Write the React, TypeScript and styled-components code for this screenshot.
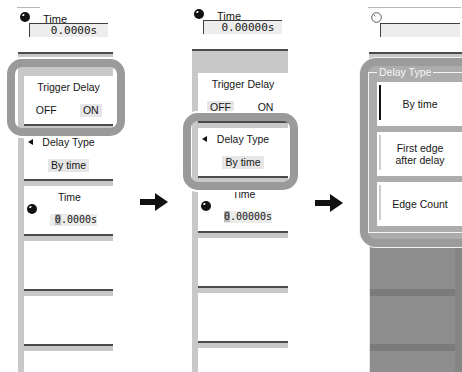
import React from "react";
import styled, { createGlobalStyle } from "styled-components";

const GlobalStyle = createGlobalStyle`
  html, body { margin: 0; padding: 0; background: #fff; }
  body {
    width: 462px; height: 372px; overflow: hidden;
    font-family: "Liberation Sans", Arial, sans-serif;
    color: #161616;
  }
`;

const Stage = styled.div`
  position: relative;
  width: 462px;
  height: 372px;
  overflow: hidden;
  box-sizing: border-box;
  padding-left: 18px;
  display: flex;
  align-items: flex-start;
  background: #fff;
`;

const Panel = styled.div<{ $w: number; $shift?: number; $gap?: number }>`
  flex: none;
  width: ${(p) => p.$w}px;
  margin-top: ${(p) => p.$shift ?? 0}px;
  margin-left: ${(p) => p.$gap ?? 0}px;
  display: flex;
  flex-direction: column;
  height: 420px;
`;

const Header = styled.div`
  height: 52px;
  box-sizing: border-box;
  padding-top: 7px;
  background: #fff;
  display: flex;
  flex-direction: column;
`;

const TopRule = styled.div<{ $w: string }>`
  height: 1px;
  width: ${(p) => p.$w};
  margin-left: -1px;
  background: ${(p) => (p.$w === "0" ? "transparent" : "#b9b9b9")};
`;

const HeaderRow = styled.div`
  display: flex;
  align-items: flex-start;
  height: 12px;
  margin-top: 4px;
  padding-left: 2px;
`;

const HeaderLabel = styled.span`
  margin-left: 13px;
  margin-top: 1px;
  font-size: 11px;
  line-height: 12px;
  text-decoration: underline;
  text-underline-offset: 1px;
`;

const HeaderField = styled.div<{ $w: number }>`
  margin-left: 11px;
  margin-top: -1px;
  width: ${(p) => p.$w}px;
  height: 14px;
  box-sizing: border-box;
  border-top: 1px solid #3e3e3e;
  border-left: 1px solid #3e3e3e;
  background: #ededed;
  padding-left: 10px;
  text-align: center;
  font-family: "DejaVu Sans Mono", "Liberation Mono", monospace;
  font-size: 11px;
  line-height: 13px;
  white-space: nowrap;
`;

const HeaderDivider = styled.div`
  height: 5px;
  border-top: 2px solid #4b4b4b;
  background: #c8c8c8;
`;

const Body = styled.div`
  flex: 1;
  background: #c8c8c8;
  padding-left: 6px;
  padding-top: 17px;
  display: flex;
  flex-direction: column;
`;

const Key = styled.div<{ $time?: boolean }>`
  flex: none;
  height: 48px;
  background: #fff;
  border-bottom: 2px solid #4b4b4b;
  margin-bottom: 5px;
  display: grid;
  grid-template-rows: 22px 24px;
  grid-template-columns: ${(p) => (p.$time ? "16px 1fr 14px" : "1fr")};
  font-size: 10.5px;
`;

const Title = styled.div<{ $col?: number }>`
  grid-row: 1;
  grid-column: ${(p) => p.$col ?? 1};
  display: flex;
  align-items: center;
  justify-content: center;
  line-height: 12px;
  white-space: nowrap;
`;

const MarkedTitle = styled.div`
  grid-row: 1;
  display: grid;
  grid-template-columns: 1fr auto 1fr;
  align-items: center;
  line-height: 12px;
  white-space: nowrap;
`;

const Pointer = styled.span`
  justify-self: start;
  margin-left: 4px;
  width: 0;
  height: 0;
  border-top: 3.5px solid transparent;
  border-bottom: 3.5px solid transparent;
  border-right: 5px solid #111;
`;

const OptionRow = styled.div`
  grid-row: 2;
  display: grid;
  grid-template-columns: 1fr 1fr;
  align-items: center;
  justify-items: center;
`;

const SingleRow = styled.div<{ $col?: number }>`
  grid-row: 2;
  grid-column: ${(p) => p.$col ?? 1};
  display: flex;
  align-items: center;
  justify-content: center;
`;

const Chip = styled.span<{ $on?: boolean }>`
  padding: 1px 3px;
  line-height: 11px;
  background: ${(p) => (p.$on ? "#e6e6e6" : "transparent")};
  white-space: nowrap;
`;

const KnobCell = styled.div`
  grid-column: 1;
  grid-row: 1 / span 2;
  align-self: center;
  justify-self: center;
  display: flex;
`;

const ValueChip = styled.span`
  margin-left: 8px;
  min-width: 47px;
  text-align: right;
  background: #ebebeb;
  font-family: "DejaVu Sans Mono", "Liberation Mono", monospace;
  font-size: 10px;
  line-height: 12px;
  white-space: nowrap;
`;

const Cursor = styled.span`
  background: #bcbcbc;
`;

const DimBody = styled.div`
  flex: 1;
  background: #8e8e8e;
  border-left: 1px solid #e4e4e4;
  border-right: 7px solid #858585;
  padding-top: 17px;
  display: flex;
  flex-direction: column;
`;

const DimKey = styled.div`
  flex: none;
  height: 48px;
  border-bottom: 7px solid #7b7b7b;
`;

const Arrow = styled.svg<{ $gap: number; $top: number }>`
  flex: none;
  display: block;
  margin-left: ${(p) => p.$gap}px;
  margin-top: ${(p) => p.$top}px;
`;

const Highlight = styled.div<{ $x: number; $y: number; $w: number; $h: number }>`
  position: absolute;
  left: ${(p) => p.$x}px;
  top: ${(p) => p.$y}px;
  width: ${(p) => p.$w}px;
  height: ${(p) => p.$h}px;
  box-sizing: border-box;
  border: 8px solid #9a9a9a;
  border-radius: 15px;
  box-shadow: 0 0 0 2px #fff;
  pointer-events: none;
`;

const Popup = styled.div`
  position: absolute;
  left: 360px;
  top: 58px;
  width: 118px;
  box-sizing: border-box;
  border: 8px solid #9b9b9b;
  border-radius: 16px;
  box-shadow: 0 0 0 1px #f2f2f2;
  background: #acacac;
  padding: 0 0 6px 0;
`;

const Group = styled.fieldset`
  margin: 0;
  border: 1px solid #f4f4f4;
  padding: 4px 6px 6px 8px;
  display: flex;
  flex-direction: column;
  gap: 6px;
  min-width: 0;
`;

const GroupLegend = styled.legend`
  padding: 0 2px;
  margin-left: 0;
  font-size: 10.5px;
  line-height: 12px;
  color: #f6f6f6;
`;

const Choice = styled.div<{ $on?: boolean }>`
  position: relative;
  height: 44px;
  width: 86px;
  background: #fff;
  display: flex;
  align-items: center;
  justify-content: center;
  text-align: center;
  font-size: 10.5px;
  line-height: 12px;
  &::before {
    content: "";
    position: absolute;
    left: 2px;
    top: 3px;
    bottom: 6px;
    width: 2px;
    background: ${(p) => (p.$on ? "#111" : "#cdcdcd")};
  }
`;

const Knob = ({ lit = true }: { lit?: boolean }) =>
  lit ? (
    <svg width="10" height="10" viewBox="0 0 10 10">
      <circle cx="5" cy="5" r="5" fill="#111" />
      <ellipse cx="3.4" cy="3" rx="1.3" ry="0.9" fill="#fff" transform="rotate(-35 3.4 3)" />
    </svg>
  ) : (
    <svg width="11" height="11" viewBox="0 0 11 11">
      <circle cx="5.5" cy="5.5" r="4.8" fill="#fff" stroke="#4a4a4a" strokeWidth="0.9" />
      <line x1="2.8" y1="2.8" x2="4.4" y2="4.4" stroke="#4a4a4a" strokeWidth="0.9" />
    </svg>
  );

const BigArrow = ({ gap, top }: { gap: number; top: number }) => (
  <Arrow $gap={gap} $top={top} width="28" height="18" viewBox="0 0 28 18">
    <rect x="0" y="6" width="16" height="6" fill="#111" />
    <polygon points="15,0 28,9 15,18" fill="#111" />
  </Arrow>
);

type MenuProps = { onSelected: boolean; value: string; header: string; rule: string; shift?: number; gap?: number; w: number };

const Menu = ({ onSelected, value, header, rule, shift, gap, w }: MenuProps) => (
  <Panel $w={w} $shift={shift} $gap={gap}>
    <Header>
      <TopRule $w={rule} />
      <HeaderRow>
        <Knob />
        <HeaderLabel>Time</HeaderLabel>
      </HeaderRow>
      <HeaderField $w={79}>{header}</HeaderField>
    </Header>
    <HeaderDivider />
    <Body>
      <Key>
        <Title>Trigger Delay</Title>
        <OptionRow>
          <Chip $on={!onSelected}>OFF</Chip>
          <Chip $on={onSelected}>ON</Chip>
        </OptionRow>
      </Key>
      <Key>
        <MarkedTitle>
          <Pointer />
          <span>Delay Type</span>
          <span />
        </MarkedTitle>
        <SingleRow>
          <Chip $on>By time</Chip>
        </SingleRow>
      </Key>
      <Key $time>
        <KnobCell>
          <Knob />
        </KnobCell>
        <Title $col={2}>Time</Title>
        <SingleRow $col={2}>
          <ValueChip>
            <Cursor>0</Cursor>
            {value}
          </ValueChip>
        </SingleRow>
      </Key>
      <Key />
      <Key />
      <Key />
    </Body>
  </Panel>
);

export default function App() {
  return (
    <>
      <GlobalStyle />
      <Stage>
        <Menu w={95} onSelected value=".0000s" header="0.0000s" rule="23px" />
        <BigArrow gap={27} top={193} />
        <Menu w={96} gap={24} shift={-3} onSelected={false} value=".00000s" header="0.00000s" rule="0" />
        <BigArrow gap={27} top={194} />
        <Panel $w={93} $gap={26}>
          <Header>
            <TopRule $w="100%" />
            <HeaderRow>
              <Knob lit={false} />
            </HeaderRow>
            <HeaderField $w={80} />
          </Header>
          <HeaderDivider />
          <DimBody>
            <DimKey />
            <DimKey />
            <DimKey />
            <DimKey />
            <DimKey />
            <DimKey />
          </DimBody>
        </Panel>
        <Highlight $x={7} $y={59} $w={118} $h={77} />
        <Highlight $x={183} $y={113} $w={115} $h={77} />
        <Popup>
          <Group>
            <GroupLegend>Delay Type</GroupLegend>
            <Choice $on>By time</Choice>
            <Choice>
              First edge
              <br />
              after delay
            </Choice>
            <Choice>Edge Count</Choice>
          </Group>
        </Popup>
      </Stage>
    </>
  );
}
